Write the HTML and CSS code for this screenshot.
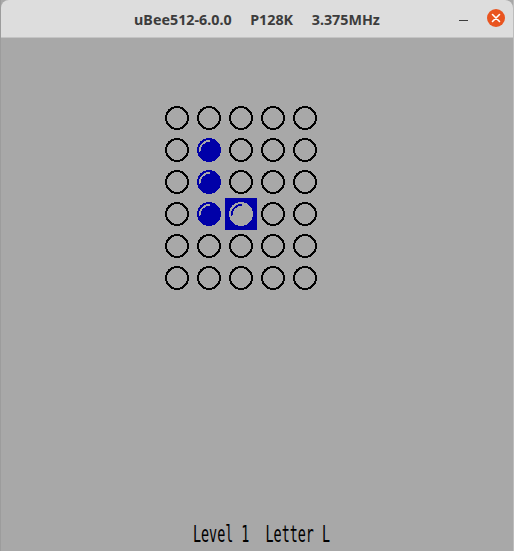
FILE: index.html
```html
<!DOCTYPE html>
<html lang="en">
<head>
    <meta charset="UTF-8">
    <title>uBee512-6.0.0</title>
    <link rel="stylesheet" href="styles.css">
</head>
<body>
    <div class="window">
        <div class="titlebar">
            <span class="title">uBee512-6.0.0&nbsp;&nbsp;&nbsp;&nbsp;&nbsp;P128K&nbsp;&nbsp;&nbsp;&nbsp;&nbsp;3.375MHz</span>
            <span class="minimize"></span>
            <span class="close">
                <svg width="10" height="10" viewBox="0 0 10 10"><path d="M1.5 1.5 L8.5 8.5 M8.5 1.5 L1.5 8.5" stroke="#fff" stroke-width="1.6" stroke-linecap="round"/></svg>
            </span>
        </div>
        <div class="screen">
            <div class="board" id="board"></div>
            <div class="status">Level 1&nbsp;&nbsp;Letter L</div>
        </div>
    </div>

    <script>
        // 0 = empty, 1 = ball, 2 = cursor on empty hole
        var grid = [
            [0, 0, 0, 0, 0],
            [0, 1, 0, 0, 0],
            [0, 1, 0, 0, 0],
            [0, 1, 2, 0, 0],
            [0, 0, 0, 0, 0],
            [0, 0, 0, 0, 0]
        ];

        var hole = '<circle cx="16" cy="16" r="11" fill="none" stroke="#000" stroke-width="2"/>';
        var ball = '<circle cx="16" cy="16" r="12" fill="#0000a8"/>' +
                   '<path d="M7.2 17.5 A9 9 0 0 1 17 7.05" fill="none" stroke="#a8a8a8" stroke-width="2"/>';
        var cursor = '<rect x="0" y="0" width="32" height="32" fill="#0000a8"/>' +
                     '<circle cx="16" cy="16" r="12" fill="#a8a8a8"/>' +
                     '<path d="M7.2 17.5 A9 9 0 0 1 17 7.05" fill="none" stroke="#0000a8" stroke-width="2"/>';

        var board = document.getElementById("board");
        var html = "";
        for (var r = 0; r < grid.length; r++) {
            for (var c = 0; c < grid[r].length; c++) {
                var v = grid[r][c];
                var inner = v === 1 ? ball : (v === 2 ? cursor : hole);
                html += '<svg class="cell" width="32" height="32" viewBox="0 0 32 32" shape-rendering="crispEdges">' + inner + '</svg>';
            }
        }
        board.innerHTML = html;
    </script>
</body>
</html>
```

FILE: styles.css
```css
html, body { margin: 0; height: 100%; background-color: #a8a8a8; }
.window { display: flex; flex-direction: column; height: 551px; width: 514px; box-sizing: border-box; border-right: 1px solid #bdbdbd; border-left: 1px solid #9c9c9c; }
.titlebar {
    height: 37px; background-color: #dddddd; border-bottom: 1px solid #c4c4c4;
    border-radius: 8px 8px 0 0; position: relative;
    display: flex; align-items: center; justify-content: center;
}
.title { font-family: "Noto Sans", "DejaVu Sans", sans-serif; font-weight: 700; font-size: 14.3px; color: #3c3c3c; margin-top: 2px; }
.minimize { position: absolute; left: 458px; top: 20px; width: 9px; height: 1px; background-color: #3c3c3c; }
.close {
    position: absolute; left: 486px; top: 9px; width: 18px; height: 18px; border-radius: 50%;
    background-color: #e9541f; display: flex; align-items: center; justify-content: center;
}
.screen { flex: 1; display: flex; flex-direction: column; background-color: #a8a8a8; }
.board { display: grid; grid-template-columns: repeat(5, 32px); grid-auto-rows: 32px; margin: 64px 0 0 160px; }
.cell { display: block; }
.status {
    margin-top: auto; margin-bottom: 6px; margin-left: 192px;
    font-family: "DejaVu Sans Mono", monospace; font-size: 13.4px; color: #000;
    transform: scaleY(1.7); transform-origin: bottom left; line-height: 12px;
}
```
